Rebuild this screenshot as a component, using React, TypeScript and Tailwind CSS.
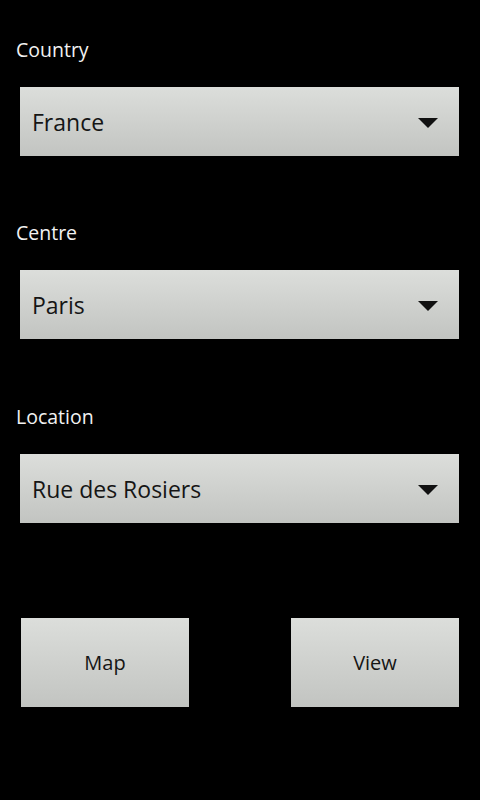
const fields = [
  { label: "Country", value: "France", gap: "" },
  { label: "Centre", value: "Paris", gap: "mt-[63px]" },
  { label: "Location", value: "Rue des Rosiers", gap: "mt-[64px]" },
];

function Spinner({ value }: { value: string }) {
  return (
    <div className="ml-[20px] mr-[21px] mt-[23px] flex h-[69px] items-center justify-between bg-gradient-to-b from-[#dcdedb] to-[#c2c4c1] pl-[12px] pr-[21px] pt-[2px] shadow-[0_1px_1px_rgba(0,0,0,0.6)]">
      <span className="text-[23px] text-[#151515]">{value}</span>
      <svg width="20" height="10" viewBox="0 0 20 10">
        <polygon points="0,0 20,0 10,10" fill="#111" />
      </svg>
    </div>
  );
}

export default function App() {
  return (
    <div
      className="flex h-[800px] w-[480px] flex-col bg-black pt-[36px]"
      style={{ fontFamily: '"Open Sans", "DejaVu Sans", sans-serif' }}
    >
      {fields.map((f) => (
        <div key={f.label} className={f.gap}>
          <div className="h-[28px] pl-[16px] text-[19.5px] leading-[28px] text-[#f2f2f2]">
            {f.label}
          </div>
          <Spinner value={f.value} />
        </div>
      ))}
      <div className="mt-[95px] flex justify-between pl-[21px] pr-[21px]">
        {["Map", "View"].map((b) => (
          <button
            key={b}
            className="flex h-[89px] w-[168px] items-center justify-center bg-gradient-to-b from-[#dcdedb] to-[#c2c4c1] text-[20px] text-[#151515]"
          >
            {b}
          </button>
        ))}
      </div>
    </div>
  );
}
